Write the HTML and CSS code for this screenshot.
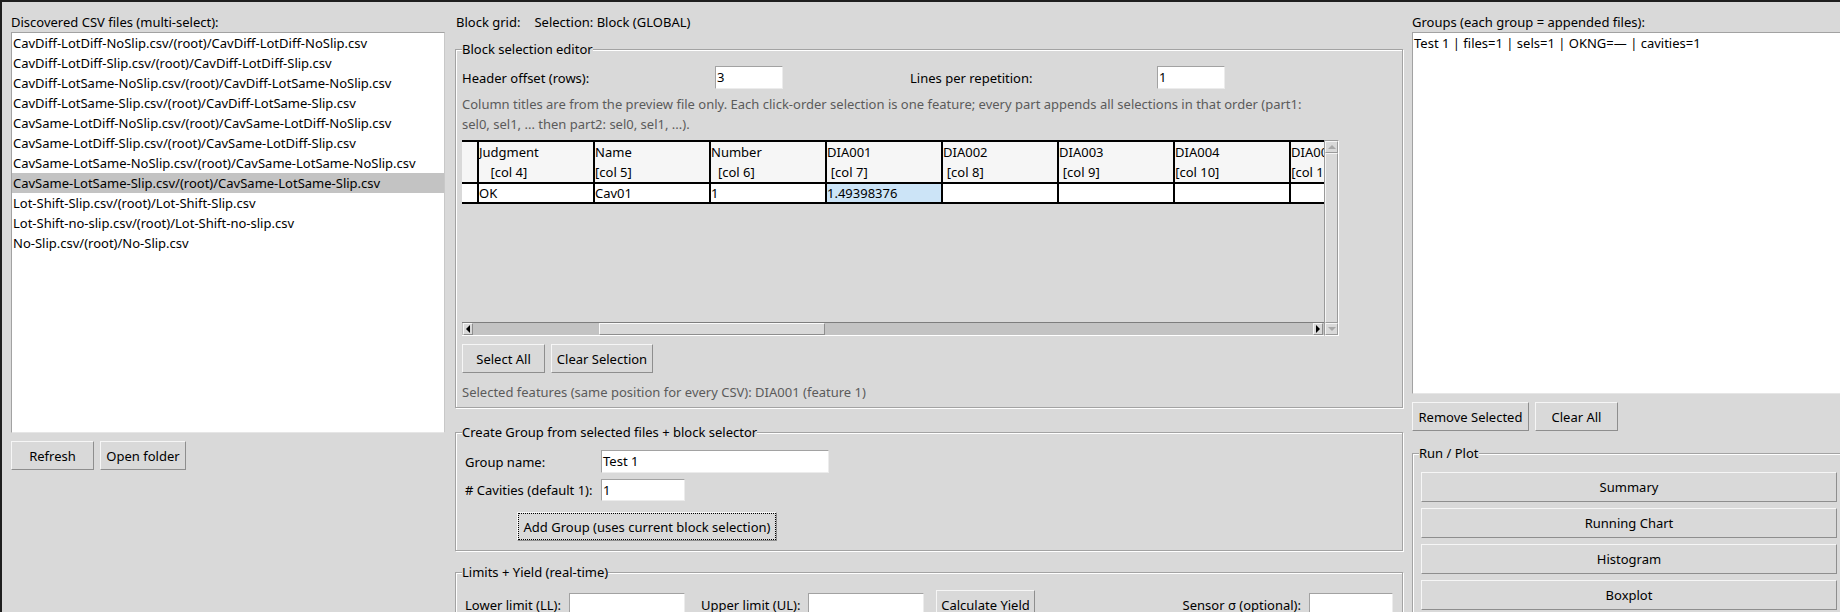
FILE: index.html
```html
<!DOCTYPE html>
<html lang="en">
<head>
<meta charset="utf-8">
<title>CSV Block Analyzer</title>
<link rel="stylesheet" href="styles.css">
</head>
<body>
<div class="app">
  <section class="col col-files">
    <div class="caption">Discovered CSV files (multi-select):</div>
    <div class="listbox files">
      <div class="item">CavDiff-LotDiff-NoSlip.csv/(root)/CavDiff-LotDiff-NoSlip.csv</div>
      <div class="item">CavDiff-LotDiff-Slip.csv/(root)/CavDiff-LotDiff-Slip.csv</div>
      <div class="item">CavDiff-LotSame-NoSlip.csv/(root)/CavDiff-LotSame-NoSlip.csv</div>
      <div class="item">CavDiff-LotSame-Slip.csv/(root)/CavDiff-LotSame-Slip.csv</div>
      <div class="item">CavSame-LotDiff-NoSlip.csv/(root)/CavSame-LotDiff-NoSlip.csv</div>
      <div class="item">CavSame-LotDiff-Slip.csv/(root)/CavSame-LotDiff-Slip.csv</div>
      <div class="item">CavSame-LotSame-NoSlip.csv/(root)/CavSame-LotSame-NoSlip.csv</div>
      <div class="item sel">CavSame-LotSame-Slip.csv/(root)/CavSame-LotSame-Slip.csv</div>
      <div class="item">Lot-Shift-Slip.csv/(root)/Lot-Shift-Slip.csv</div>
      <div class="item">Lot-Shift-no-slip.csv/(root)/Lot-Shift-no-slip.csv</div>
      <div class="item">No-Slip.csv/(root)/No-Slip.csv</div>
    </div>
    <div class="btnrow">
      <button class="btn w-refresh">Refresh</button>
      <button class="btn w-open">Open folder</button>
    </div>
  </section>

  <section class="col col-mid">
    <div class="gridhead"><span>Block grid:</span><span>Selection: Block (GLOBAL)</span></div>

    <div class="lframe f-editor">
      <span class="lf-label">Block selection editor</span>
      <div class="offsets">
        <span>Header offset (rows):</span>
        <div class="entry">3</div>
        <span></span>
        <span>Lines per repetition:</span>
        <div class="entry">1</div>
      </div>
      <p class="note">Column titles are from the preview file only. Each click-order selection is one feature; every part appends all selections in that order (part1:<br>sel0, sel1, ... then part2: sel0, sel1, ...).</p>
      <div class="gridwrap">
        <div class="gridview">
          <div class="gridcanvas">
            <div class="table">
              <div class="hd idx"></div>
              <div class="hd"><span class="t">Judgment<br>[col 4]</span></div>
              <div class="hd"><span class="t">Name<br>[col 5]</span></div>
              <div class="hd"><span class="t">Number<br>[col 6]</span></div>
              <div class="hd"><span class="t">DIA001<br>[col 7]</span></div>
              <div class="hd"><span class="t">DIA002<br>[col 8]</span></div>
              <div class="hd"><span class="t">DIA003<br>[col 9]</span></div>
              <div class="hd"><span class="t">DIA004<br>[col 10]</span></div>
              <div class="hd"><span class="t">DIA005<br>[col 11]</span></div>
              <div class="cell idx"></div>
              <div class="cell">OK</div>
              <div class="cell">Cav01</div>
              <div class="cell">1</div>
              <div class="cell picked">1.49398376</div>
              <div class="cell"></div>
              <div class="cell"></div>
              <div class="cell"></div>
              <div class="cell"></div>
            </div>
          </div>
          <div class="hscroll">
            <span class="sb-arrow"><span class="tri-left"></span></span>
            <span class="hthumb"></span>
            <span class="sb-fill"></span>
            <span class="sb-arrow"><span class="tri-right"></span></span>
          </div>
        </div>
        <div class="vscroll">
          <span class="v-arrow"><span class="tri-up"></span></span>
          <span class="vthumb"></span>
          <span class="v-arrow"><span class="tri-down"></span></span>
        </div>
      </div>
      <div class="btnrow">
        <button class="btn w-selall">Select All</button>
        <button class="btn w-clearsel">Clear Selection</button>
      </div>
      <p class="selinfo">Selected features (same position for every CSV): DIA001 (feature 1)</p>
    </div>

    <div class="lframe f-create">
      <span class="lf-label">Create Group from selected files + block selector</span>
      <div class="form-row">
        <span class="flabel">Group name:</span>
        <div class="entry w-gname">Test 1</div>
      </div>
      <div class="form-row row-cav">
        <span class="flabel"># Cavities (default 1):</span>
        <div class="entry w-cav">1</div>
      </div>
      <button class="btn btn-add">Add Group (uses current block selection)</button>
    </div>

    <div class="lframe f-limits">
      <span class="lf-label">Limits + Yield (real-time)</span>
      <div class="limits-row">
        <span class="l-ll">Lower limit (LL):</span>
        <div class="entry w-lim"></div>
        <span class="l-ul">Upper limit (UL):</span>
        <div class="entry w-lim"></div>
        <button class="btn btn-calc">Calculate Yield</button>
        <span class="l-sensor">Sensor σ (optional):</span>
        <div class="entry w-sensor"></div>
      </div>
    </div>
  </section>

  <section class="col col-groups">
    <div class="caption">Groups (each group = appended files):</div>
    <div class="listbox groups">
      <div class="item">Test 1 | files=1 | sels=1 | OKNG=— | cavities=1</div>
    </div>
    <div class="btnrow btnrow-groups">
      <button class="btn w-remove">Remove Selected</button>
      <button class="btn w-clearall">Clear All</button>
    </div>
    <div class="lframe f-run">
      <span class="lf-label">Run / Plot</span>
      <div class="runbtns">
        <button class="btn btn-run">Summary</button>
        <button class="btn btn-run">Running Chart</button>
        <button class="btn btn-run">Histogram</button>
        <button class="btn btn-run">Boxplot</button>
      </div>
    </div>
  </section>
</div>
</body>
</html>
```

FILE: styles.css
```css
* { box-sizing: border-box; }

html, body { margin: 0; padding: 0; }

body {
  width: 1840px;
  height: 612px;
  overflow: hidden;
  background: #d9d9d9;
  border-top: 2px solid #1e1e1e;
  border-left: 2px solid #1e1e1e;
  font: 13px/20px "Noto Sans", "DejaVu Sans", sans-serif;
  color: #000;
}

.app {
  display: flex;
  align-items: flex-start;
  padding: 10px 0 0 9px;
}

.col { flex: none; }
.col-files { width: 434px; }
.col-mid { width: 948px; margin-left: 10px; }
.col-groups { width: 434px; margin-left: 9px; }

.caption { height: 20px; white-space: nowrap; }

/* listboxes */
.listbox {
  background: #fff;
  border: 1px solid;
  border-color: #a2a2a2 #c8c8c8 #e6e6e6 #a2a2a2;
  overflow: hidden;
}
.files { height: 401px; }
.groups { height: 362px; }
.item {
  height: 20px;
  line-height: 20px;
  padding-left: 1px;
  white-space: nowrap;
}
.item.sel { background: #c3c3c3; }

/* buttons */
.btn {
  height: 29px;
  margin: 0;
  padding: 0;
  border: 1px solid;
  border-color: #f6f6f6 #8e8e8e #8e8e8e #f6f6f6;
  background: #d9d9d9;
  font: inherit;
  color: #000;
  display: flex;
  align-items: center;
  justify-content: center;
  white-space: nowrap;
}
.btnrow { display: flex; gap: 6px; margin-top: 8px; }
.btnrow-groups { margin-top: 8px; }
.w-refresh { width: 83px; }
.w-open { width: 86px; }
.w-selall { width: 83px; }
.w-clearsel { width: 102px; }
.w-remove { width: 117px; }
.w-clearall { width: 83px; }

/* entries */
.entry {
  height: 23px;
  background: #fff;
  border: 1px solid;
  border-color: #a2a2a2 #ececec #ececec #a2a2a2;
  padding-left: 1px;
  line-height: 21px;
  white-space: nowrap;
}

/* label frames (groove) */
.lframe {
  position: relative;
  border: 1px solid #a3a3a3;
  box-shadow: inset 1px 1px 0 #fff, 1px 1px 0 #fff;
}
.lf-label {
  position: absolute;
  top: -11px;
  left: 6px;
  line-height: 20px;
  background: #d9d9d9;
  white-space: nowrap;
}

/* middle column */
.gridhead { display: flex; gap: 14px; height: 20px; padding-left: 1px; }

.f-editor { margin-top: 17px; padding: 16px 6px 5px 6px; }

.offsets {
  display: grid;
  grid-template-columns: 253px 68px 127px 247px 68px;
  align-items: center;
  height: 23px;
}

.note {
  margin: 5px 0 0;
  color: #5b5b5b;
  line-height: 20px;
  white-space: nowrap;
}

.gridwrap { display: flex; margin-top: 6px; height: 196px; }
.gridview { width: 862px; display: flex; flex-direction: column; }
.gridcanvas { height: 182px; overflow: hidden; }

.table {
  display: grid;
  grid-template-columns: 15px repeat(8, 116px);
  width: max-content;
  border-top: 2px solid #000;
}
.hd {
  height: 42px;
  background: #f6f6f6;
  border-left: 2px solid #000;
  border-bottom: 2px solid #000;
  white-space: nowrap;
  overflow: hidden;
}
.hd .t { display: inline-block; text-align: center; line-height: 20px; }
.cell {
  height: 20px;
  line-height: 18px;
  background: #fff;
  border-left: 2px solid #000;
  border-bottom: 2px solid #000;
  white-space: nowrap;
  overflow: hidden;
}
.hd.idx, .cell.idx { border-left: none; }
.cell.picked { background: #cce4f7; }

.hscroll {
  display: flex;
  align-items: center;
  height: 14px;
  background: #c3c3c3;
  border-top: 1px solid #7d7d7d;
  border-bottom: 1px solid #fff;
}
.sb-arrow {
  width: 10px;
  height: 12px;
  margin-left: 1px;
  background: #d9d9d9;
  border: 1px solid;
  border-color: #f6f6f6 #8e8e8e #8e8e8e #f6f6f6;
  display: flex;
  align-items: center;
  justify-content: center;
}
.sb-arrow:last-child { margin: 0 1px 0 0; }
.hthumb {
  width: 226px;
  height: 12px;
  margin-left: 126px;
  background: #d9d9d9;
  border: 1px solid;
  border-color: #fafafa #8e8e8e #8e8e8e #fafafa;
}
.sb-fill { flex: 1; }
.tri-left { border-style: solid; border-width: 4px 4px 4px 0; border-color: transparent #000 transparent transparent; }
.tri-right { border-style: solid; border-width: 4px 0 4px 4px; border-color: transparent transparent transparent #000; }

.vscroll {
  width: 15px;
  height: 196px;
  display: flex;
  flex-direction: column;
  background: #d9d9d9;
  border: 1px solid;
  border-color: #9a9a9a #fff #fff #9a9a9a;
}
.v-arrow {
  height: 12px;
  flex: none;
  border: 1px solid;
  border-color: #f6f6f6 #9a9a9a #9a9a9a #f6f6f6;
  display: flex;
  align-items: center;
  justify-content: center;
}
.vthumb {
  flex: 1;
  border: 1px solid;
  border-color: #f6f6f6 #9a9a9a #9a9a9a #f6f6f6;
}
.tri-up { border-style: solid; border-width: 0 4px 4px 4px; border-color: transparent transparent #a8a8a8 transparent; }
.tri-down { border-style: solid; border-width: 4px 4px 0 4px; border-color: #a8a8a8 transparent transparent transparent; }

.selinfo { margin: 9px 0 0; color: #5b5b5b; line-height: 20px; }

.f-create { margin-top: 24px; padding: 17px 9px 9px 9px; }
.form-row { display: flex; align-items: center; height: 23px; }
.row-cav { margin-top: 6px; height: 22px; }
.flabel { width: 136px; flex: none; }
.w-gname { width: 228px; }
.w-cav { width: 84px; height: 22px; }
.btn-add {
  margin: 11px 0 0 52px;
  width: 260px;
  outline: 1px dotted #000;
  outline-offset: -2px;
}

.f-limits { margin-top: 21px; padding: 17px 9px 0 9px; height: 60px; }
.limits-row { display: flex; align-items: center; height: 29px; }
.l-ll { width: 104px; flex: none; }
.w-lim { width: 116px; flex: none; }
.l-ul { width: 107px; margin-left: 16px; flex: none; }
.btn-calc { width: 99px; margin-left: 12px; flex: none; }
.l-sensor { margin-left: auto; margin-right: 8px; }
.w-sensor { width: 84px; flex: none; }

/* right column */
.f-run { margin-top: 22px; padding: 18px 8px 0 8px; height: 200px; }
.runbtns { display: flex; flex-direction: column; gap: 6px; }
.btn-run { width: 100%; height: 30px; }
```
